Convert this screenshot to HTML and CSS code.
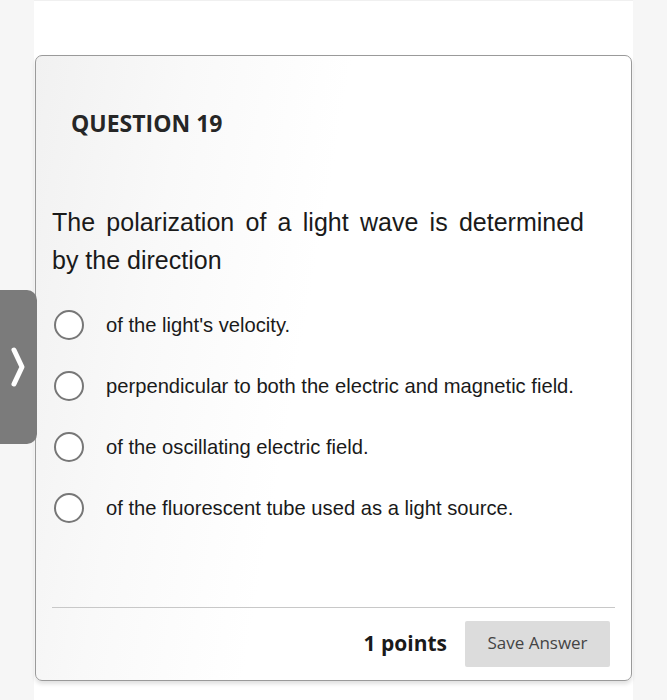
FILE: index.html
```html
<!DOCTYPE html>
<html>
<head>
<meta charset="utf-8">
<link rel="stylesheet" href="styles.css">
</head>
<body>
<div class="page">
  <div class="column">
    <div class="card">
      <h2 class="qtitle">QUESTION 19</h2>
      <p class="qtext">The polarization of a light wave is determined by the direction</p>
      <ul class="options">
        <li class="option"><span class="radio"></span><span class="label">of the light's velocity.</span></li>
        <li class="option"><span class="radio"></span><span class="label">perpendicular to both the electric and magnetic field.</span></li>
        <li class="option"><span class="radio"></span><span class="label">of the oscillating electric field.</span></li>
        <li class="option"><span class="radio"></span><span class="label">of the fluorescent tube used as a light source.</span></li>
      </ul>
      <div class="divider"></div>
      <div class="footer">
        <span class="points">1 points</span>
        <button class="save">Save Answer</button>
      </div>
    </div>
  </div>
  <div class="sidetab">
    <svg width="16" height="44" viewBox="0 0 16 44"><path d="M4 5 L12 22 L4 39" fill="none" stroke="#fff" stroke-width="5" stroke-linecap="round" stroke-linejoin="round"/></svg>
  </div>
</div>
</body>
</html>
```

FILE: styles.css
```css
html, body {
  margin: 0;
  padding: 0;
  background: #f6f6f6;
}
.page {
  position: relative;
  width: 667px;
  height: 700px;
  overflow: hidden;
}
.column {
  margin-left: 34px;
  width: 599px;
  height: 700px;
  background: #fff;
  padding-top: 54px;
  box-sizing: border-box;
  border-top: 1px solid #f0f0f0;
}
.card {
  margin-left: 1px;
  width: 597px;
  height: 626px;
  box-sizing: border-box;
  border: 1px solid #9a9a9a;
  border-radius: 7px;
  box-shadow: 0 3px 4px rgba(0,0,0,0.12);
  background: linear-gradient(100deg, #f1f1f1 0%, #f9f9f9 22%, #ffffff 45%);
  padding: 51px 0 0 0;
  display: flex;
  flex-direction: column;
}
.qtitle {
  margin: 0 0 0 35px;
  font-family: "Open Sans", sans-serif;
  font-weight: 700;
  font-size: 23px;
  line-height: 32px;
  color: #262626;
}
.qtext {
  margin: 64px 47px 0 16px;
  font-family: "Liberation Sans", Arial, sans-serif;
  font-size: 25px;
  line-height: 38px;
  color: #1a1a1a;
  text-align: justify;
}
.options {
  list-style: none;
  margin: 15px 0 0 0;
  padding: 0;
}
.option {
  height: 61px;
  display: flex;
  align-items: center;
  padding-left: 18px;
}
.radio {
  width: 30px;
  height: 30px;
  box-sizing: border-box;
  border: 2px solid #777;
  border-radius: 50%;
  flex: none;
  background: #fff;
}
.label {
  margin-left: 22px;
  margin-top: 2px;
  font-family: "Liberation Sans", Arial, sans-serif;
  font-size: 20.2px;
  color: #1a1a1a;
}
.divider {
  margin: 69px 16px 0 16px;
  height: 1px;
  background: #c8c8c8;
}
.footer {
  margin-top: 13px;
  display: flex;
  justify-content: flex-end;
  align-items: center;
  padding-right: 21px;
}
.points {
  font-family: "Open Sans", sans-serif;
  font-weight: 700;
  font-size: 21px;
  line-height: 28px;
  color: #1a1a1a;
  margin-right: 18px;
  margin-top: -3px;
}
.save {
  width: 145px;
  height: 46px;
  border: none;
  border-radius: 2px;
  background: #dcdcdc;
  font-family: "Open Sans", sans-serif;
  font-size: 17px;
  color: #444;
  padding: 0 0 3px 0;
}
.sidetab {
  position: absolute;
  left: -10px;
  top: 290px;
  width: 47px;
  height: 154px;
  background: #7b7b7b;
  border-radius: 10px;
  display: flex;
  align-items: center;
  justify-content: center;
  padding-left: 10px;
  box-sizing: border-box;
}
.sidetab svg {
  margin-left: -2px;
}
```
